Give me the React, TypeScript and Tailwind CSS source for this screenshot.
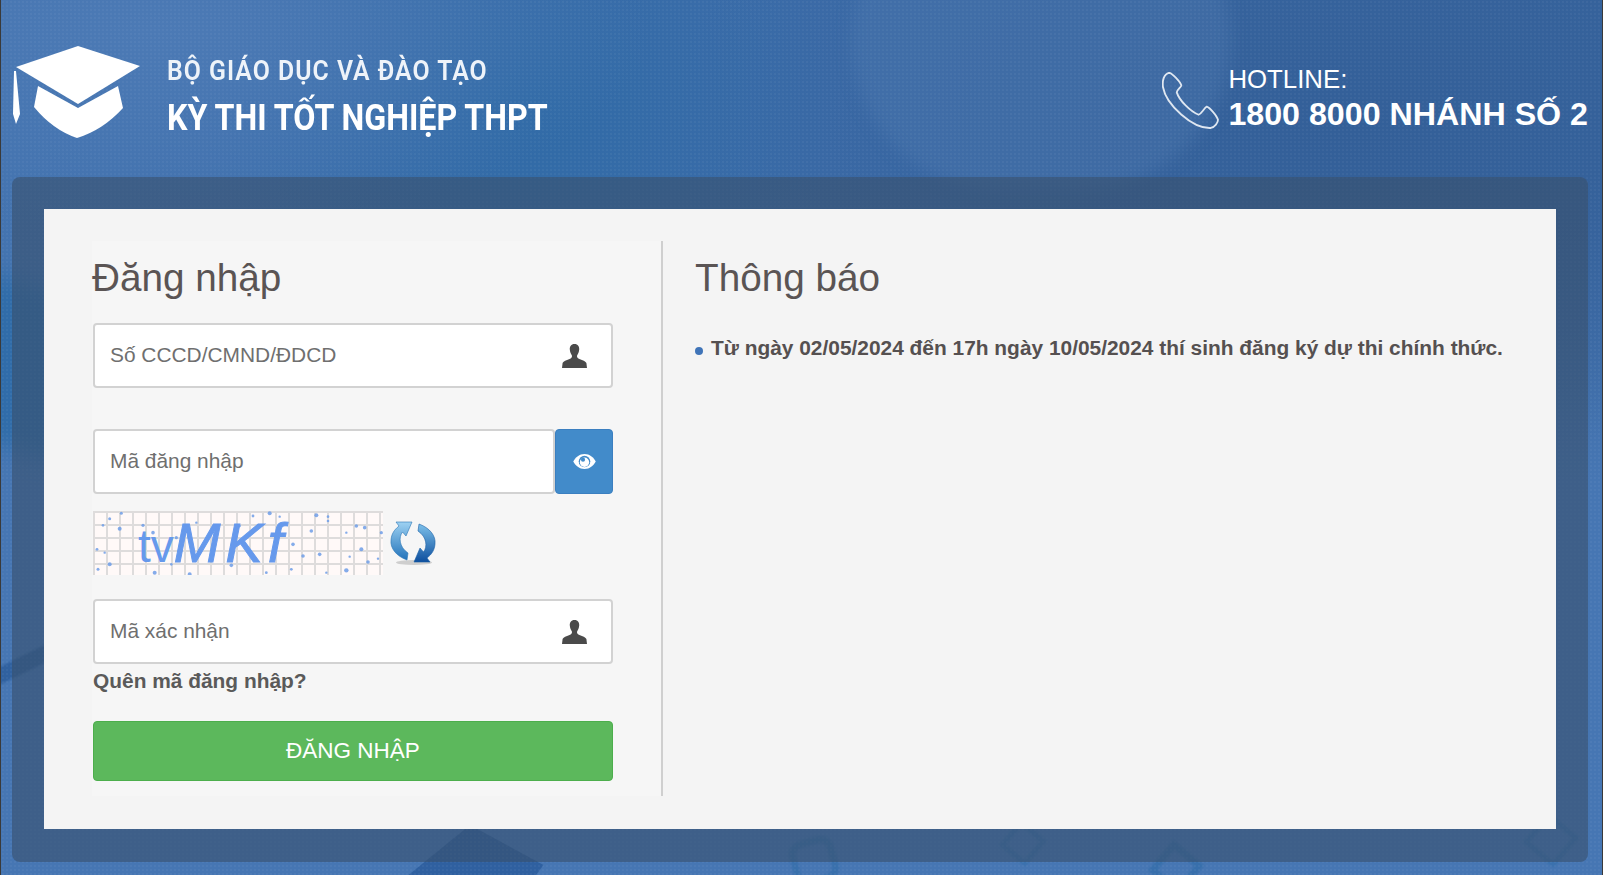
const sans = "font-['Liberation_Sans',Arial,sans-serif]";

function CapLogo() {
  return (
    <svg className="h-[94px] w-[130px] shrink-0" viewBox="0 0 130 94" fill="#ffffff">
      <path d="M3 21 L65 0 L127 20 L65 58 Z" />
      <path d="M25 40 L65 62 L105 40 L110 62 Q90 84 64 92 Q40 84 21 61 Z" />
      <path d="M1 25 L3 25 L7 68 L3 78 L0 68 Z" />
    </svg>
  );
}

function PhoneIcon() {
  return (
    <svg className="h-[57px] w-[57px] shrink-0" viewBox="0 0 56 56" fill="none" stroke="#dfe7f1" strokeWidth="1.8" strokeLinejoin="round">
      <path d="M7 0.8 C10 1 18 10 19 13 C19 15 15 17 14.5 20 C17 28 28 39 36 42 C39 41 41 36 44 34 C47 35 54 43 55 47 C55 50 52 54 48 55 C30 56 4 32 1 15 C0 8 2 2 7 0.8 Z" />
    </svg>
  );
}

function UserIcon() {
  return (
    <svg className="h-[24px] w-[25px]" viewBox="0 0 25 24" fill="#4a4a4a">
      <path d="M12.5 0 C9 0 7.6 2.6 7.8 5.6 C8 8 8.8 10 9.8 11.2 C10.2 12 10 13.4 9 14.2 C7 15.6 1.6 16.4 0.6 19 L0 24 L25 24 L24.4 19 C23.4 16.4 18 15.6 16 14.2 C15 13.4 14.8 12 15.2 11.2 C16.2 10 17 8 17.2 5.6 C17.4 2.6 16 0 12.5 0 Z" />
    </svg>
  );
}

function EyeIcon() {
  return (
    <svg className="h-[15px] w-[23px]" viewBox="0 0 24 16">
      <path fill="#ffffff" d="M12 0 C6.5 0 2.5 3.6 0 8 C2.5 12.4 6.5 16 12 16 C17.5 16 21.5 12.4 24 8 C21.5 3.6 17.5 0 12 0 Z" />
      <circle cx="12" cy="8" r="6.2" fill="#428bca" />
      <circle cx="12" cy="8.8" r="5" fill="#ffffff" />
      <circle cx="10.4" cy="6" r="2.2" fill="#428bca" />
    </svg>
  );
}

function RefreshIcon() {
  return (
    <svg className="ml-[7px] h-[46px] w-[46px]" viewBox="0 0 46 46">
      <defs>
        <linearGradient id="refreshLeft" x1="0" y1="0" x2="0" y2="1">
          <stop offset="0" stopColor="#9ed2f2" />
          <stop offset="1" stopColor="#2273ba" />
        </linearGradient>
        <linearGradient id="refreshRight" x1="0" y1="0" x2="0" y2="1">
          <stop offset="0" stopColor="#7cc0ea" />
          <stop offset="1" stopColor="#0e4f9e" />
        </linearGradient>
      </defs>
      <ellipse cx="24" cy="42.5" rx="18" ry="2.6" fill="#000000" opacity="0.16" />
      <path fill="url(#refreshLeft)" stroke="#2a75b5" strokeWidth="0.6" d="M6 2 L22 2 L16 16 L12.5 12 C8.5 17 9 27 18 33 L17 40 C6 36 0 28 1 20 C1.5 14 4 10 9 6 Z" />
      <path fill="url(#refreshRight)" stroke="#1a5fa6" strokeWidth="0.6" d="M40 42 L24 42 L30 28 L33.5 32 C37.5 27 37 17 28 11 L29 4 C40 8 46 16 45 24 C44.5 30 42 34 37 38 Z" />
    </svg>
  );
}

const captchaDots = [
  [530, 22, 2], [670, 28, 2], [790, 60, 1.8], [815, 65, 1.8], [80, 68, 2], [50, 38, 1.5], [30, 58, 1.3], [600, 115, 1.8],
  [655, 75, 1.8], [680, 145, 1.8], [630, 150, 1.8], [805, 130, 2], [825, 168, 1.8], [760, 193, 2.2], [415, 178, 1.8],
  [290, 205, 2], [185, 200, 2], [50, 175, 2], [15, 190, 1.5], [595, 190, 1.4], [520, 200, 1.4], [85, 22, 1.5], [480, 30, 1.4],
  [705, 32, 1.3], [705, 45, 1.3], [560, 32, 1.2], [760, 80, 1.2], [865, 80, 1.6], [770, 152, 1.2], [855, 158, 1.2], [12, 130, 1.4],
  [35, 140, 1.2], [235, 175, 1.3], [180, 80, 1.8], [250, 95, 1.6], [150, 58, 1.6], [310, 50, 1.2], [700, 200, 1.2], [440, 60, 1.2],
];

function Captcha() {
  return (
    <div className="relative h-[64px] w-[290px] overflow-hidden bg-[#fff9f8] bg-[linear-gradient(#dedcdc_2px,transparent_2px),linear-gradient(90deg,#dedcdc_2px,transparent_2px)] bg-[size:13px_13px]">
      <svg className="absolute inset-0 h-full w-full" viewBox="0 0 290 64">
        {captchaDots.map(([x, y, r]) => (
          <circle key={`${x}-${y}`} cx={x / 3} cy={(y - 15) / 3} r={r} fill="#6f9de8" opacity={0.85} />
        ))}
      </svg>
      <span className="absolute left-[45px] top-[4px] whitespace-nowrap font-['Liberation_Sans',Arial,sans-serif] text-[#6699ec]">
        <span className="text-[46px] leading-[56px]">tv</span>
        <span className="text-[56px] italic leading-[56px] tracking-[5px] [-webkit-text-stroke:1px_#6699ec]">MKf</span>
      </span>
    </div>
  );
}

function TextField({ label, icon }: { label: string; icon?: boolean }) {
  return (
    <div className="flex h-[65px] flex-1 items-center justify-between rounded-[4px] border-2 border-[#d2d2d2] bg-white pl-[15px] pr-[24px]">
      <span className="pb-[2px] text-[20.9px] text-[#6f6f6f]">{label}</span>
      {icon ? <UserIcon /> : null}
    </div>
  );
}

export default function App() {
  return (
    <div className={`relative h-[875px] w-[1603px] overflow-hidden border-x border-[#3a3a3a] bg-[#4676b3] ${sans}`}>
      {/* background photo, approximated with soft shapes */}
      <div className="absolute inset-0 bg-[radial-gradient(ellipse_500px_200px_at_150px_30px,#4c7ab5,transparent),radial-gradient(ellipse_320px_260px_at_520px_110px,#2f6aa6,transparent),radial-gradient(ellipse_700px_330px_at_1350px_130px,#335f98,transparent),linear-gradient(180deg,transparent_20%,#4676b3_55%),linear-gradient(90deg,#4373af,#3c6ca9_50%,#38659e)]" />
      <div className="absolute left-[850px] top-[-110px] h-[300px] w-[380px] rounded-full bg-[#4f7bb2]/35 blur-sm" />
      <div className="absolute left-[-30px] top-[280px] h-[170px] w-[90px] skew-y-[16deg] bg-[#2a6aa8]/80 blur-md" />
      <div className="absolute left-[-10px] top-[655px] h-[16px] w-[70px] -rotate-[26deg] bg-[#285a98]/75 blur-[1px]" />
      <div className="absolute left-[400px] top-[825px] h-[50px] w-[150px] bg-[#285a9a]/75 [clip-path:polygon(46%_0,95%_80%,90%_100%,5%_100%)]" />
      <div className="absolute left-[790px] top-[838px] h-[46px] w-[46px] -rotate-[15deg] rounded-[14px] border-[7px] border-[#2c6aa6]/50 blur-[1px]" />
      <div className="absolute left-[1005px] top-[826px] h-[34px] w-[34px] rotate-[40deg] border-[5px] border-[#2c6aa6]/45 blur-[1px]" />
      <div className="absolute left-[1155px] top-[848px] h-[40px] w-[40px] rotate-[40deg] border-[7px] border-[#2c6aa6]/55 blur-[1px]" />
      <div className="absolute left-[1530px] top-[820px] h-[40px] w-[40px] rotate-[40deg] border-[5px] border-[#2c6aa6]/45 blur-[1px]" />
      <div className="absolute inset-0 bg-[radial-gradient(#ffffff0a_1px,transparent_1px)] bg-[size:4px_4px]" />

      <div className="relative flex h-full flex-col pl-[11px] pr-[14px]">
        <header className="flex h-[177px] items-start justify-between">
          <div className="flex">
            <div className="ml-[1px] mt-[46px]">
              <CapLogo />
            </div>
            <div className="ml-[24px] mt-[52px] w-[400px] origin-left scale-x-[0.87] whitespace-nowrap font-['Roboto',sans-serif] text-white">
              <div className="text-[28.5px] font-semibold leading-[38px] tracking-[1.17px] text-[#eef3f9]">BỘ GIÁO DỤC VÀ ĐÀO TẠO</div>
              <div className="mt-[6px] text-[37px] font-bold leading-[44px]">KỲ THI TỐT NGHIỆP THPT</div>
            </div>
          </div>
          <div className="mt-[66px] flex">
            <div className="mt-[6px]">
              <PhoneIcon />
            </div>
            <div className="ml-[9px] text-white">
              <div className="text-[25.8px] leading-[26px]">HOTLINE:</div>
              <div className="mt-[4px] whitespace-nowrap text-[32.2px] font-bold leading-[36px]">1800 8000 NHÁNH SỐ 2</div>
            </div>
          </div>
        </header>

        <main className="h-[685px] rounded-[8px] bg-[#38506d]/60 p-[32px]">
          <div className="flex h-[620px] bg-[#f4f4f4] px-[48px] py-[32px]">
            <section className="h-[555px] w-[571px] border-r-2 border-[#cfcfcf] bg-[#f6f6f6] pl-[1px] pr-[48px]">
              <h2 className="-ml-[1px] mt-[1px] text-[38.7px] leading-[72px] text-[#5a5454]">Đăng nhập</h2>
              <div className="mt-[9px] flex">
                <TextField label="Số CCCD/CMND/ĐDCD" icon />
              </div>
              <div className="mt-[41px] flex">
                <TextField label="Mã đăng nhập" />
                <div className="flex w-[58px] items-center justify-center rounded-[4px] border border-[#3b7fc0] bg-[#428bca]">
                  <EyeIcon />
                </div>
              </div>
              <div className="mt-[17px] flex items-center">
                <Captcha />
                <RefreshIcon />
              </div>
              <div className="mt-[24px] flex">
                <TextField label="Mã xác nhận" icon />
              </div>
              <div className="mt-[3px] text-[20.9px] font-bold leading-[28px] text-[#5a5a5a]">Quên mã đăng nhập?</div>
              <button type="button" className="mt-[26px] h-[60px] w-full rounded-[4px] border border-[#4cae4c] bg-[#5cb85c] text-[22.5px] text-white">
                ĐĂNG NHẬP
              </button>
            </section>
            <section className="flex-1 pl-[32px]">
              <h2 className="mt-[1px] text-[38.7px] leading-[72px] text-[#5a5454]">Thông báo</h2>
              <div className="mt-[20px] flex items-center">
                <span className="mr-[8px] mt-[6px] h-[8px] w-[8px] rounded-full bg-[#3f74b8]" />
                <span className="whitespace-nowrap text-[20.9px] font-bold leading-[28px] text-[#555050]">
                  Từ ngày 02/05/2024 đến 17h ngày 10/05/2024 thí sinh đăng ký dự thi chính thức.
                </span>
              </div>
            </section>
          </div>
        </main>
      </div>
    </div>
  );
}
